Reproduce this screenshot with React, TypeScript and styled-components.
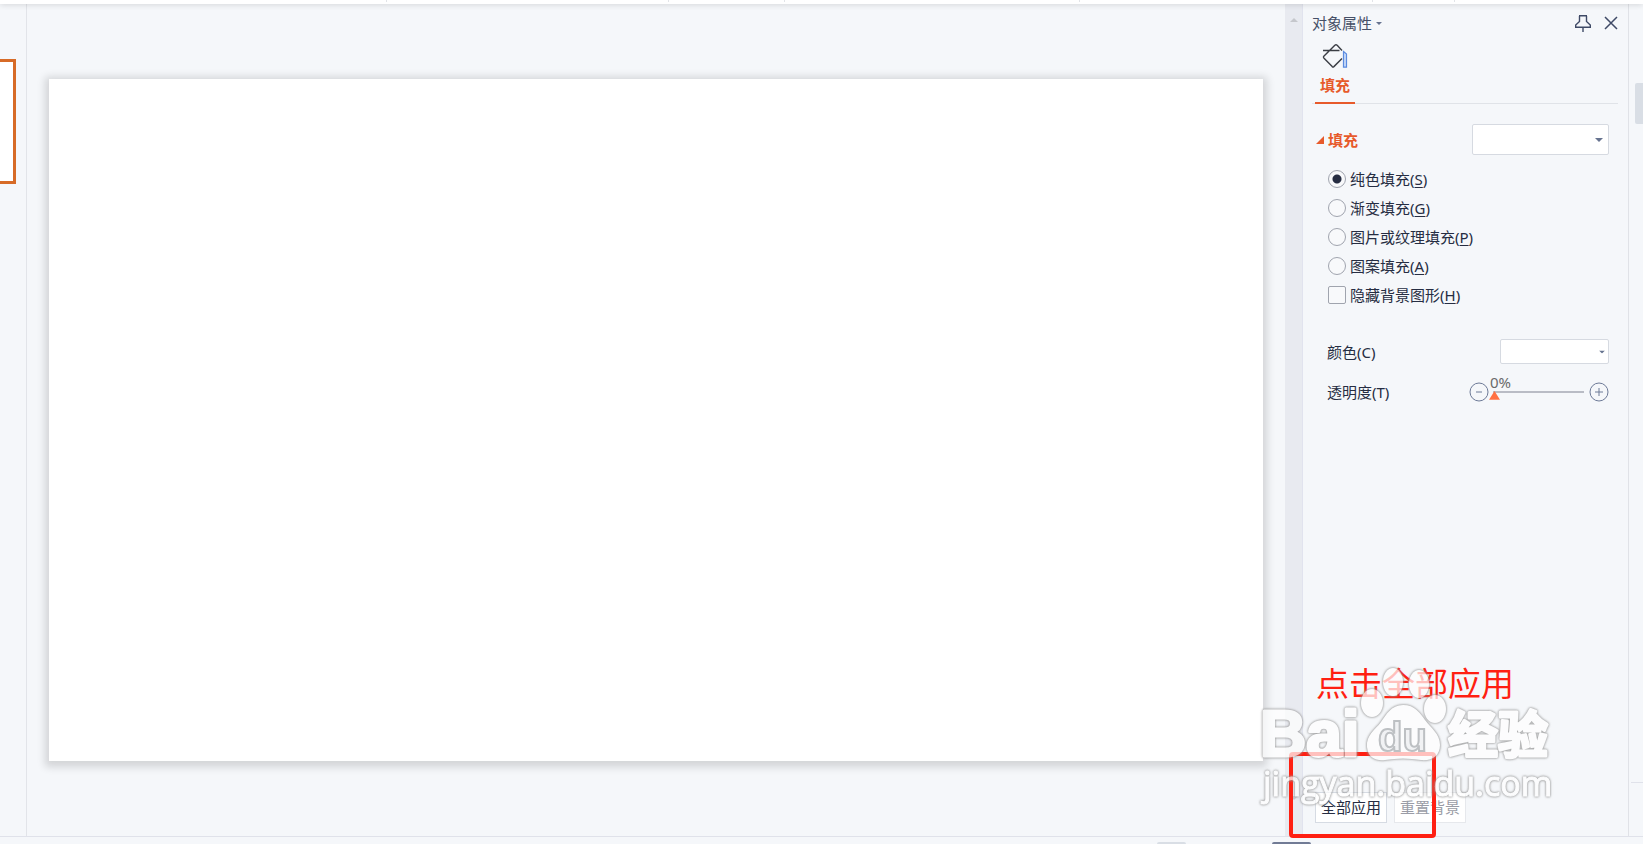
import React, { useState } from "react";
import styled, { createGlobalStyle } from "styled-components";

const GlobalStyle = createGlobalStyle`
  * { box-sizing: border-box; }
  body {
    margin: 0;
    background: #f5f7fa;
    color: #262d42;
    font: 15px/20px "Noto Sans", "Noto Sans CJK SC", sans-serif;
  }
  button, input, select { font: inherit; color: inherit; margin: 0; }
`;

const Page = styled.div`
  position: relative;
  display: flex;
  flex-direction: column;
  min-height: 100vh;
  overflow: hidden;
`;

const Ribbon = styled.header`
  position: relative;
  z-index: 1;
  display: flex;
  height: 4px;
  background: #fff;
  box-shadow: 0 0 6px rgba(0, 0, 0, 0.2);
`;

const RibbonGroup = styled.div<{ $width: number }>`
  width: ${(p) => p.$width}px;
  height: 2px;
  border-right: 1px solid #e2e4e8;
`;

const Workspace = styled.main`
  display: flex;
  flex: 1;
`;

const Thumbnails = styled.aside`
  width: 27px;
  padding-top: 55px;
  border-right: 1px solid #e2e4e9;
`;

const Thumbnail = styled.div`
  width: 16px;
  height: 125px;
  background: #fff;
  border: 3px solid #d76b27;
  border-left: 0;
`;

const Canvas = styled.section`
  display: flex;
  flex: 1;
  padding: 75px 22px;
`;

const Slide = styled.div`
  flex: 1;
  background: #fff;
  box-shadow: 0 2px 8px 4px rgba(0, 0, 0, 0.14);
`;

const ScrollTrack = styled.div`
  display: flex;
  flex-direction: column;
  align-items: center;
  justify-content: space-between;
  width: 18px;
  padding: 14px 0 36px;
  background: #e8eaf0;
  border-right: 1px solid #e1e3ee;
`;

const ScrollEnds = styled.div`
  display: grid;
  gap: 16px;
`;

const Panel = styled.aside`
  display: flex;
  flex-direction: column;
  width: 326px;
  padding: 8px 10px 13px 9px;
  border-right: 1px solid #e0e2e7;
`;

const PanelHeader = styled.header`
  display: flex;
  align-items: center;
  justify-content: space-between;
  height: 22px;
`;

const PlainButton = styled.button`
  display: flex;
  align-items: center;
  gap: 4px;
  padding: 0;
  border: 0;
  background: none;
`;

const TitleButton = styled(PlainButton)`
  color: #465067;
`;

const HeaderActions = styled.div`
  display: flex;
  gap: 12px;
`;

const Tabs = styled.nav`
  display: flex;
  padding: 0 3px;
  border-bottom: 1px solid #e0e3e8;
`;

const Tab = styled.button`
  display: flex;
  flex-direction: column;
  align-items: center;
  gap: 6px;
  width: 40px;
  height: 70px;
  margin-bottom: -1px;
  padding: 9px 0 0;
  border: 0;
  border-bottom: 2px solid #e75a2b;
  background: none;
  color: #e75a2b;
  font-weight: 700;
`;

const SectionHeader = styled.div`
  display: flex;
  align-items: center;
  justify-content: space-between;
  padding: 20px 9px 0 4px;
`;

const SectionToggle = styled(PlainButton)`
  color: #e75a2b;
  font-weight: 700;
  line-height: 20px;
`;

const SelectBox = styled.div<{ $width: number; $height: number }>`
  position: relative;
  width: ${(p) => p.$width}px;
  height: ${(p) => p.$height}px;

  select {
    display: block;
    width: 100%;
    height: 100%;
    appearance: none;
    background: #fff;
    border: 1px solid #d6dae1;
    border-radius: 2px;
  }
  svg {
    position: absolute;
    right: ${(p) => (p.$height > 28 ? 6 : 4)}px;
    top: 50%;
    transform: translateY(-50%);
    pointer-events: none;
  }
`;

const Options = styled.fieldset`
  margin: 9px 0 0;
  padding: 0 0 0 16px;
  border: 0;
`;

const Option = styled.label`
  display: flex;
  align-items: center;
  gap: 4px;
  height: 29px;

  input {
    flex: none;
    width: 18px;
    height: 18px;
    appearance: none;
    border: 1px solid #a0a4ae;
    background: #f8f9fb;
  }
  input[type="radio"] { border-radius: 50%; }
  input[type="checkbox"] { border-radius: 2px; }
  input[type="radio"]:checked {
    background: radial-gradient(circle, #262d42 4px, #f8f9fb 5px);
  }
  u { text-underline-offset: 2px; }
`;

const Field = styled.div<{ $top: number }>`
  display: flex;
  align-items: center;
  justify-content: space-between;
  margin-top: ${(p) => p.$top}px;
  padding: 0 9px 0 15px;
`;

const Stepper = styled.div`
  position: relative;
  display: flex;
  align-items: center;

  output {
    position: absolute;
    left: 21px;
    top: -10px;
    color: #6a6a6a;
    line-height: 20px;
  }
`;

const StepButton = styled(PlainButton)`
  color: #6d7a97;
`;

const Range = styled.input`
  width: 95px;
  height: 19px;
  margin: 0 5px 0 0;
  appearance: none;
  background: linear-gradient(#b9bcc5, #b9bcc5) 4px 8px / 100% 2px no-repeat;

  &::-webkit-slider-thumb {
    appearance: none;
    width: 11px;
    height: 17px;
    background: #ff7043;
    clip-path: polygon(50% 44%, 100% 96%, 0 96%);
  }
`;

const PanelFooter = styled.footer`
  display: flex;
  gap: 7px;
  margin-top: auto;
  padding-left: 3px;
`;

const ActionButton = styled.button`
  width: 72px;
  height: 31px;
  padding: 0 0 2px;
  border: 1px solid #d6dbe3;
  background: #fff;

  &:disabled {
    color: #9a9ca6;
    border-color: #e6e8ec;
  }
`;

const SideRail = styled.aside`
  display: flex;
  flex-direction: column;
  align-items: flex-end;
  justify-content: space-between;
  width: 14px;
  padding: 79px 0 53px;
`;

const RailThumb = styled.div`
  width: 8px;
  height: 41px;
  border-radius: 2px 0 0 2px;
  background: #d9dee5;
`;

const RailRule = styled.div`
  width: 12px;
  height: 1px;
  background: #e0e2ea;
`;

const StatusBar = styled.footer`
  display: flex;
  align-items: flex-end;
  justify-content: flex-end;
  gap: 86px;
  height: 8px;
  padding-right: 332px;
  border-top: 1px solid #e0e2ea;
`;

const StatusItem = styled.div<{ $width: number; $color: string }>`
  width: ${(p) => p.$width}px;
  height: 2px;
  border-radius: 2px 2px 0 0;
  background: ${(p) => p.$color};
`;

const Callout = styled.p`
  position: absolute;
  right: 129px;
  bottom: 140px;
  margin: 0;
  color: #ff1f12;
  font-size: 33px;
  line-height: 40px;
`;

const Highlight = styled.div`
  position: absolute;
  right: 207px;
  bottom: 6px;
  width: 147px;
  height: 86px;
  border: 4px solid #ff1f12;
  border-radius: 4px;
`;

const Watermark = styled.svg`
  position: absolute;
  right: 83px;
  bottom: 25px;
  opacity: 0.72;
  pointer-events: none;
  filter: drop-shadow(0 0 1px #808080) drop-shadow(0 0 1px #a8a8a8);
`;

const Caret = ({ size = 8, color = "#66738f", up = false }: { size?: number; color?: string; up?: boolean }) => (
  <svg width={size} height={size / 2} viewBox="0 0 8 4" aria-hidden="true">
    <path d={up ? "M0 4h8L4 0z" : "M0 0h8L4 4z"} fill={color} />
  </svg>
);

const FILLS = [
  { text: "纯色填充", key: "S" },
  { text: "渐变填充", key: "G" },
  { text: "图片或纹理填充", key: "P" },
  { text: "图案填充", key: "A" },
];

export default function App() {
  const [fill, setFill] = useState("S");
  const [opacity, setOpacity] = useState(0);
  const step = (d: number) => setOpacity((v) => Math.min(100, Math.max(0, v + d)));

  return (
    <Page>
      <GlobalStyle />
      <Ribbon>
        {[387, 282, 116, 295, 293, 82].map((w, i) => (
          <RibbonGroup key={i} $width={w} />
        ))}
      </Ribbon>
      <Workspace>
        <Thumbnails>
          <Thumbnail />
        </Thumbnails>
        <Canvas>
          <Slide />
        </Canvas>
        <ScrollTrack>
          <Caret up color="#c5c7cc" />
          <ScrollEnds>
            <Caret up color="#c5c7cc" />
            <Caret color="#c5c7cc" />
          </ScrollEnds>
        </ScrollTrack>
        <Panel>
          <PanelHeader>
            <TitleButton>
              对象属性
              <Caret size={6} />
            </TitleButton>
            <HeaderActions>
              <PlainButton aria-label="固定">
                <svg width="18" height="18" viewBox="0 0 18 18" fill="none" stroke="#3f4a66" strokeWidth="1.4">
                  <path d="M5 1.7h8M5.5 2v5.5L1.7 11v2.3h14.6V11l-3.8-3.5V2M9 13.5V18" />
                </svg>
              </PlainButton>
              <PlainButton aria-label="关闭">
                <svg width="14" height="14" viewBox="0 0 14 14" fill="none" stroke="#3f4a66" strokeWidth="1.5">
                  <path d="M1 1l12 12M13 1L1 13" />
                </svg>
              </PlainButton>
            </HeaderActions>
          </PanelHeader>
          <Tabs>
            <Tab>
              <svg width="26" height="26" viewBox="0 0 26 26" fill="none" aria-hidden="true">
                <path
                  d="M20 7.5L15.2 2.2Q14 1.3 12.8 2.2L1.8 13.2Q1 14 1.8 14.9L10.2 23.6Q11 24.3 11.9 23.6L20 15.5M1 7.5h16.5"
                  stroke="#3a3d44"
                  strokeWidth="1.4"
                />
                <path d="M21.5 8.5l3 2.5v13.2h-3z" fill="#c9dbf8" stroke="#5b8be0" strokeWidth="1.2" />
              </svg>
              填充
            </Tab>
          </Tabs>
          <SectionHeader>
            <SectionToggle>
              <svg width="8" height="8" viewBox="0 0 8 8" aria-hidden="true">
                <path d="M8 0v8H0z" fill="#e75a2b" />
              </svg>
              填充
            </SectionToggle>
            <SelectBox $width={137} $height={31}>
              <select aria-label="填充" />
              <Caret />
            </SelectBox>
          </SectionHeader>
          <Options>
            {FILLS.map((f) => (
              <Option key={f.key}>
                <input type="radio" name="fill" checked={fill === f.key} onChange={() => setFill(f.key)} />
                <span>
                  {f.text}(<u>{f.key}</u>)
                </span>
              </Option>
            ))}
            <Option>
              <input type="checkbox" />
              <span>
                隐藏背景图形(<u>H</u>)
              </span>
            </Option>
          </Options>
          <Field $top={30}>
            <label htmlFor="color">颜色(C)</label>
            <SelectBox $width={109} $height={25}>
              <select id="color" />
              <Caret size={6} />
            </SelectBox>
          </Field>
          <Field $top={18}>
            <label htmlFor="opacity">透明度(T)</label>
            <Stepper>
              <StepButton aria-label="减少" onClick={() => step(-1)}>
                <svg width="20" height="20" viewBox="0 0 20 20" fill="none" stroke="currentColor">
                  <circle cx="10" cy="10" r="9" />
                  <path d="M7 10h6" />
                </svg>
              </StepButton>
              <Range
                id="opacity"
                type="range"
                value={opacity}
                onChange={(e) => setOpacity(Number(e.target.value))}
              />
              <output htmlFor="opacity">{opacity}%</output>
              <StepButton aria-label="增加" onClick={() => step(1)}>
                <svg width="20" height="20" viewBox="0 0 20 20" fill="none" stroke="currentColor">
                  <circle cx="10" cy="10" r="9" />
                  <path d="M6 10h8M10 6v8" />
                </svg>
              </StepButton>
            </Stepper>
          </Field>
          <PanelFooter>
            <ActionButton>全部应用</ActionButton>
            <ActionButton disabled>重置背景</ActionButton>
          </PanelFooter>
        </Panel>
        <SideRail>
          <RailThumb />
          <RailRule />
        </SideRail>
      </Workspace>
      <StatusBar>
        <StatusItem $width={29} $color="#d9dee5" />
        <StatusItem $width={39} $color="#717b95" />
      </StatusBar>
      <Callout>点击全部应用</Callout>
      <Highlight />
      <Watermark width="300" height="160" viewBox="0 0 300 160" fill="#fff">
        <g stroke="#fff" strokeWidth="3" strokeLinejoin="round">
          <text x="0" y="97" fontFamily="Liberation Sans" fontWeight="700" fontSize="64">Bai</text>
          <text x="188" y="94" fontFamily="Noto Sans CJK SC" fontWeight="700" fontSize="50">经验</text>
        </g>
        <ellipse cx="112" cy="44" rx="11" ry="14" />
        <ellipse cx="133" cy="23" rx="10" ry="14" />
        <ellipse cx="159" cy="25" rx="10" ry="14" />
        <ellipse cx="175" cy="50" rx="11" ry="14" />
        <path d="M143 46c-12 0-17 10-22 17-6 8-15 13-14 25 1 11 9 14 18 13 12-2 24-2 36 0 11 1 19-4 19-15 0-11-9-17-15-25-5-7-10-15-22-15z" />
        <text
          x="118"
          y="92"
          fontFamily="Liberation Sans"
          fontWeight="700"
          fontSize="40"
          fill="#f0f1f3"
          stroke="#a8abae"
          strokeWidth="2"
        >
          du
        </text>
        <text x="3" y="137" fontFamily="Open Sans" fontWeight="400" fontSize="34" stroke="#fff" strokeWidth="1">
          jingyan.baidu.com
        </text>
      </Watermark>
    </Page>
  );
}
